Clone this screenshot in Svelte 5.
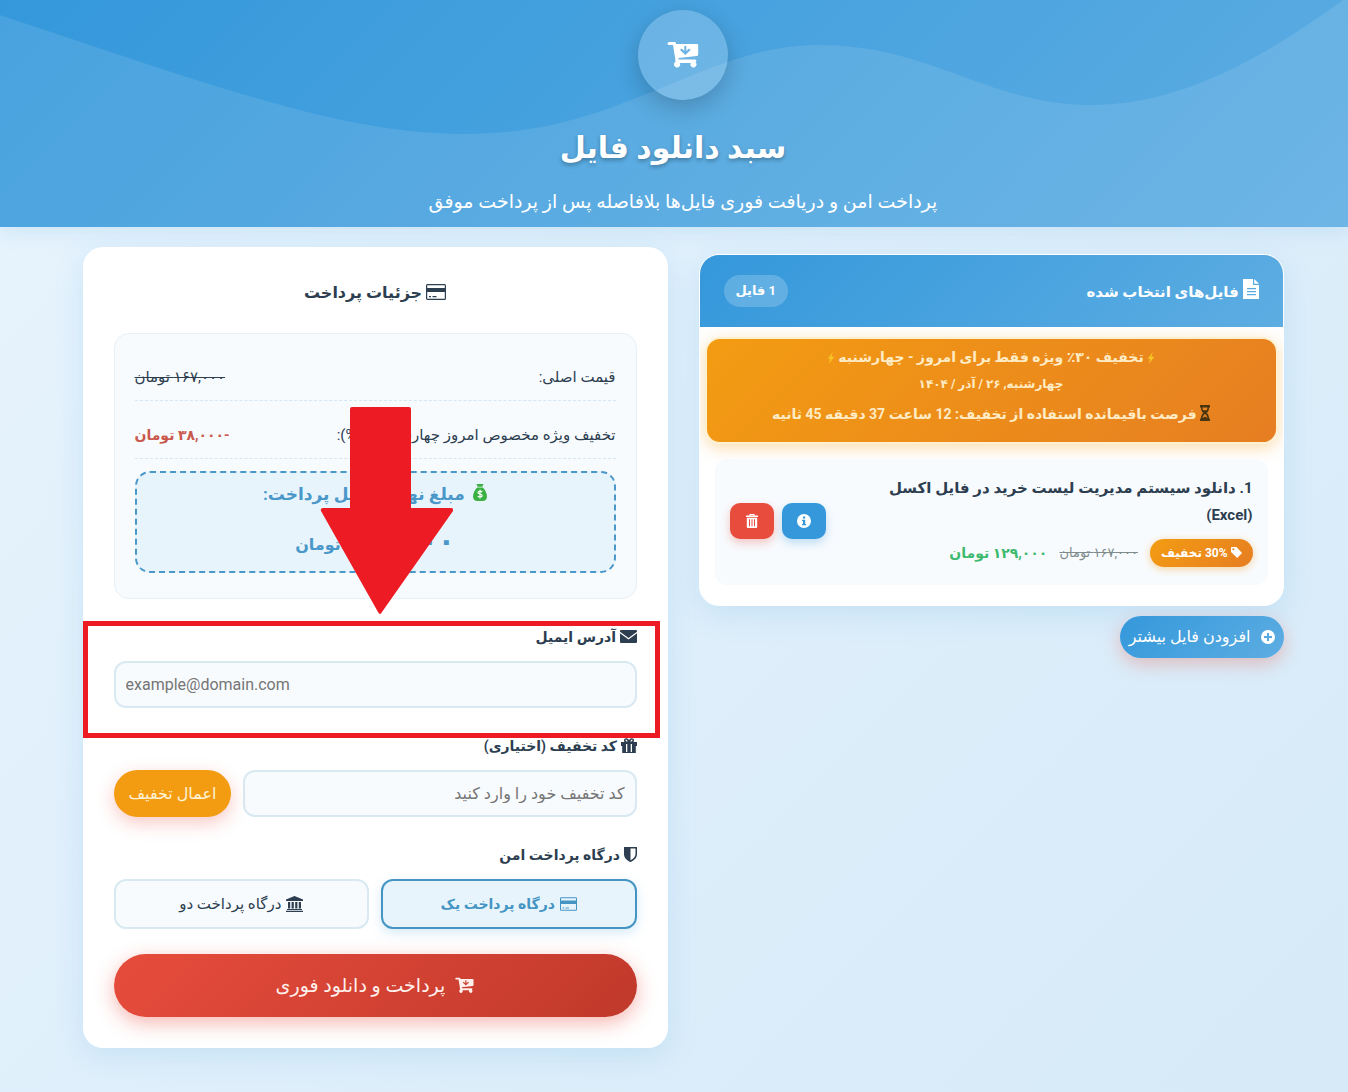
<script lang="ts">
	interface CartFile {
		id: number;
		title: string;
		discount: number;
		oldPrice: string;
		price: string;
	}

	let files = $state<CartFile[]>([
		{
			id: 1,
			title: 'دانلود سیستم مدیریت لیست خرید در فایل اکسل (Excel)',
			discount: 30,
			oldPrice: '۱۶۷,۰۰۰ تومان',
			price: '۱۲۹,۰۰۰ تومان'
		}
	]);

	let email = $state('');
	let coupon = $state('');
	let gateway = $state('one');

	function removeFile(id: number) {
		files = files.filter((f) => f.id !== id);
	}
</script>

{#snippet cartIcon()}
	<svg class="icon icon-cart" viewBox="0 0 32 28" aria-hidden="true">
		<path fill="currentColor" fill-rule="evenodd" d="M2 1h5.500a1.500 1.500 0 0 1 1.500 1.200V3h21a1.200 1.200 0 0 1 1.200 1.200V13.500a1.500 1.500 0 0 1-1.300 1.500L11.500 17l.2 1.500H28a1.400 1.400 0 0 1 .5 2.700 3 3 0 1 1-4.700.8H12.700a3 3 0 1 1-4.300-1L8.300 18 6 4H2a1.500 1.500 0 0 1 0-3zM17.300 5v5l-2.700-2.500L13 9.100 18.300 14l5.300-4.900L22 7.500 19.300 10V5z" />
	</svg>
{/snippet}

{#snippet cardIcon()}
	<svg class="icon icon-card" viewBox="0 0 20 16" aria-hidden="true">
		<rect x=".6" y=".6" width="18.800" height="14.800" rx="1" fill="none" stroke="currentColor" stroke-width="1.200" />
		<path fill="currentColor" d="M1 4h18v4H1zM3 12h2v1.200H3zM6.500 12h4v1.200h-4z" />
	</svg>
{/snippet}

<div class="page" dir="rtl">
	<header class="hero">
		<svg class="wave" viewBox="0 0 1348 227" preserveAspectRatio="none" aria-hidden="true">
			<path d="M0 15C225 90 345 134 465 134C625 134 700 45 820 45C930 45 990 105 1090 105C1180 105 1260 60 1343 0H1348V227H0Z" />
		</svg>
		<div class="hero-icon">{@render cartIcon()}</div>
		<h1>سبد دانلود فایل</h1>
		<p>پرداخت امن و دریافت فوری فایل‌ها بلافاصله پس از پرداخت موفق</p>
	</header>

	<main class="columns">
		<section class="files-column">
			<div class="files-card">
				<div class="files-header">
					<h2>
						<svg class="icon icon-file" viewBox="0 0 16 20" aria-hidden="true">
							<path fill="currentColor" fill-rule="evenodd" d="M0 0h10v6h6v14H0zM11.200 0 16 4.800h-4.800zM4 9v1.200h9V9zm0 3v1.200h9V12zm0 3v1.200h9V15z" />
						</svg>
						فایل‌های انتخاب شده
					</h2>
					<span class="count">{files.length} فایل</span>
				</div>

				<div class="promo">
					<p class="promo-title">
						<svg class="bolt" viewBox="0 0 8 14" aria-hidden="true"><path d="M6 0 0 8h3L1.500 14 8 5.500H4.500z" /></svg>
						تخفیف ۳۰٪ ویژه فقط برای امروز - چهارشنبه
						<svg class="bolt" viewBox="0 0 8 14" aria-hidden="true"><path d="M6 0 0 8h3L1.500 14 8 5.500H4.500z" /></svg>
					</p>
					<p class="promo-date">چهارشنبه, ۲۶ / آذر / ۱۴۰۴</p>
					<p class="promo-timer">
						<svg class="hourglass" viewBox="0 0 10 16" aria-hidden="true">
							<path fill-rule="evenodd" d="M0 0h10v2.500H9c0 3-1 4.500-2.500 5.500C8 9 9 10.500 9 13.500h1V16H0v-2.500h1C1 10.500 2 9 3.500 8 2 7 1 5.500 1 2.500H0zM2.500 2.500c0 1.200.3 2 .7 2.700h3.600c.4-.7.7-1.500.7-2.700zM5 9c-1.500 1-2.300 2.500-2.400 4L5 11.500 7.400 13C7.300 11.500 6.500 10 5 9z" />
						</svg>
						فرصت باقیمانده استفاده از تخفیف: 12 ساعت 37 دقیقه 45 ثانیه
					</p>
				</div>

				<ul class="file-list">
					{#each files as file, i (file.id)}
						<li class="file">
							<div class="file-info">
								<h3>{i + 1}. {file.title}</h3>
								<div class="prices">
									<span class="badge">
										<svg class="icon icon-tag" viewBox="0 0 12 12" aria-hidden="true">
											<path fill="currentColor" fill-rule="evenodd" d="M1 0h5l6 6.500L6.800 12 0 5.500V1a1 1 0 0 1 1-1zm1.600 1.400a1.100 1.100 0 1 0 0 2.200 1.100 1.100 0 0 0 0-2.200z" />
										</svg>
										{file.discount}% تخفیف
									</span>
									<del>{file.oldPrice}</del>
									<strong>{file.price}</strong>
								</div>
							</div>
							<div class="file-actions">
								<button class="square info" aria-label="اطلاعات فایل">
									<svg viewBox="0 0 14 14" aria-hidden="true">
										<path fill="currentColor" fill-rule="evenodd" d="M7 0a7 7 0 1 1 0 14A7 7 0 0 1 7 0zM6 2.500v2h2.200v-2zM5 5.700V7h1v3H5v1.300h4.200V10h-1V5.700z" />
									</svg>
								</button>
								<button class="square remove" aria-label="حذف فایل" onclick={() => removeFile(file.id)}>
									<svg viewBox="0 0 14 14" aria-hidden="true">
										<path fill="currentColor" fill-rule="evenodd" d="M4.500 0h5v1.500H13V3H1V1.500h3.500zm1 .9v.6h3V.9zM1.800 3.800h10.400V13a1 1 0 0 1-1 1H2.800a1 1 0 0 1-1-1zM4 5.200v7h1v-7zm2.500 0v7h1v-7zm2.500 0v7h1v-7z" />
									</svg>
								</button>
							</div>
						</li>
					{/each}
				</ul>
			</div>

			<button class="add-more">
				<svg viewBox="0 0 14 14" aria-hidden="true">
					<path fill="currentColor" fill-rule="evenodd" d="M7 0a7 7 0 1 1 0 14A7 7 0 0 1 7 0zM6 3v3H3v2h3v3h2V8h3V6H8V3z" />
				</svg>
				افزودن فایل بیشتر
			</button>
		</section>

		<section class="payment">
			<h2>{@render cardIcon()} جزئیات پرداخت</h2>

			<div class="summary">
				<div class="row">
					<span>قیمت اصلی:</span>
					<del>۱۶۷,۰۰۰ تومان</del>
				</div>
				<div class="row">
					<span>تخفیف ویژه مخصوص امروز چهارشنبه (30%):</span>
					<strong>-۳۸,۰۰۰ تومان</strong>
				</div>
				<div class="total">
					<div class="total-label">
						<svg class="money" viewBox="0 0 14 17" aria-hidden="true">
							<path fill="#3bb143" d="M3.500 0h7L9.300 2.800H4.700zM4.200 3.500h5.600C12 5.500 14 9 14 12.500c0 3-2 4.500-4.500 4.500h-5C2 17 0 15.500 0 12.500 0 9 2 5.500 4.200 3.500z" />
							<path fill="none" stroke="#fff" stroke-width="1.200" d="M9.200 8C8 6.800 5 7 5 8.600c0 1.800 4.200 1 4.200 3 0 1.700-3.200 1.900-4.500.6M7 5.800v8.600" />
						</svg>
						مبلغ نهایی قابل پرداخت:
					</div>
					<div class="total-price"><b>۱۲۹,۰۰۰</b> تومان</div>
				</div>
			</div>

			<div class="field">
				<label for="email">
					<svg class="icon icon-mail" viewBox="0 0 17 13" aria-hidden="true">
						<path fill="currentColor" d="M1 0h15a1 1 0 0 1 1 1v.8L8.500 8 0 1.800V1a1 1 0 0 1 1-1zM0 3.200 8.500 9.500 17 3.200V12a1 1 0 0 1-1 1H1a1 1 0 0 1-1-1z" />
					</svg>
					آدرس ایمیل
				</label>
				<input id="email" type="email" dir="ltr" placeholder="example@domain.com" bind:value={email} />
			</div>

			<div class="field">
				<label for="coupon">
					<svg class="icon icon-gift" viewBox="0 0 16 15" aria-hidden="true">
						<path fill="currentColor" fill-rule="evenodd" d="M0 4h3.500C1.500 1 5.500-1.500 8 2c2.500-3.500 6.500-1 4.500 2H16v4h-1.200v7H1.200V8H0zm4.500-2c0 1 1 1.600 2.200 1.600C6.200 2 4.800 1 4.500 2zm7 0c-.3-1-1.700 0-2.200 1.600C10.500 3.600 11.500 3 11.500 2zM5 6v8h1.300V6zm4.700 0v8H11V6z" />
					</svg>
					کد تخفیف (اختیاری)
				</label>
				<div class="coupon">
					<input id="coupon" type="text" placeholder="کد تخفیف خود را وارد کنید" bind:value={coupon} />
					<button class="apply">اعمال تخفیف</button>
				</div>
			</div>

			<fieldset class="field">
				<legend>
					<svg class="icon icon-shield" viewBox="0 0 13 15" aria-hidden="true">
						<path fill="currentColor" fill-rule="evenodd" d="M0 0h13v7c0 4-3 6.500-6.500 8C3 13.500 0 11 0 7zM6.500 1.600v11.600c3-1.500 5-3.500 5-6.200V1.600z" />
					</svg>
					درگاه پرداخت امن
				</legend>
				<div class="gateways">
					<label class="gateway" class:selected={gateway === 'one'}>
						<input type="radio" name="gateway" value="one" bind:group={gateway} />
						{@render cardIcon()} درگاه پرداخت یک
					</label>
					<label class="gateway" class:selected={gateway === 'two'}>
						<input type="radio" name="gateway" value="two" bind:group={gateway} />
						<svg class="icon icon-bank" viewBox="0 0 17 16" aria-hidden="true">
							<path fill="currentColor" d="M8.500 0 17 3.500V5H0V3.500zM2 6h2.200v6.500H2zm3.600 0h2.200v6.500H5.600zm3.600 0h2.200v6.500H9.200zm3.600 0H15v6.500h-2.200zM1 13h15v1H1zM0 14.700h17V16H0z" />
						</svg>
						درگاه پرداخت دو
					</label>
				</div>
			</fieldset>

			<button class="pay">{@render cartIcon()} پرداخت و دانلود فوری</button>

			<!-- guide marks pointing at the email field -->
			<svg class="arrow" viewBox="0 0 133 207" aria-hidden="true">
				<path d="M30 2q0-2 2-2h57q2 0 2 2v99h40q3 0 2 3L62 205q-2 4-4 0L1 104q-1-3 2-3h27z" />
			</svg>
			<div class="highlight"></div>
		</section>
	</main>
</div>

<style>
	:global(body) {
		background: #dcedfa;
	}

	.page {
		--blue: #3498db;
		--ink: #2c3e50;
		box-sizing: border-box;
		min-height: 100vh;
		overflow: hidden;
		background: linear-gradient(135deg, #e8f4fd, #d6eaf8);
		color: var(--ink);
		font-family: Roboto, 'DejaVu Sans', sans-serif;
		font-size: 15px;
		line-height: 24px;
	}

	.page * {
		box-sizing: border-box;
	}

	h1,
	h2,
	h3,
	p,
	ul {
		margin: 0;
		padding: 0;
	}

	button,
	input {
		font: inherit;
	}

	button {
		border: 0;
		cursor: pointer;
	}

	.icon {
		vertical-align: -2px;
	}

	.hero {
		position: relative;
		display: flex;
		flex-direction: column;
		align-items: center;
		padding: 10px 0 8px 18px;
		background: linear-gradient(135deg, #3498db, #5dade2);
		box-shadow: 0 4px 20px rgba(52, 152, 219, 0.15);
		color: #fff;
	}

	.wave {
		position: absolute;
		inset: 0;
		width: 100%;
		height: 100%;
		fill: rgba(255, 255, 255, 0.1);
	}

	.hero-icon {
		position: relative;
		display: grid;
		place-items: center;
		width: 90px;
		height: 90px;
		border-radius: 50%;
		background: rgba(255, 255, 255, 0.2);
		box-shadow: 0 8px 24px rgba(0, 0, 0, 0.2);
	}

	.hero-icon .icon {
		width: 32px;
		height: 28px;
	}

	.hero h1 {
		position: relative;
		margin-top: 20px;
		padding-right: 20px;
		font-size: 30px;
		line-height: 56px;
		text-shadow: 0 2px 4px rgba(0, 0, 0, 0.3);
	}

	.hero p {
		position: relative;
		margin-top: 8px;
		font-size: 19px;
		line-height: 35px;
	}

	.columns {
		display: grid;
		grid-template-columns: 1fr 1fr;
		gap: 31px;
		align-items: start;
		max-width: 1201px;
		margin: 0 auto;
		padding: 20px 0 44px 18px;
		box-sizing: content-box;
	}

	.files-column {
		margin-top: 7px;
	}

	.files-card {
		overflow: hidden;
		padding-bottom: 20px;
		border: 1px solid #fff;
		border-radius: 20px;
		background: #fff;
		box-shadow: 0 8px 30px rgba(52, 152, 219, 0.15);
	}

	.files-header {
		display: flex;
		align-items: center;
		justify-content: space-between;
		padding: 20px 24px;
		background: linear-gradient(135deg, #3498db, #5dade2);
		color: #fff;
	}

	.files-header h2 {
		font-size: 15px;
	}

	.icon-file {
		width: 16px;
		height: 20px;
	}

	.count {
		padding: 4px 12px;
		border-radius: 16px;
		background: rgba(255, 255, 255, 0.2);
		font-size: 13px;
		font-weight: 700;
	}

	.promo {
		margin: 10px 5px 15px;
		padding: 6px 8px 16px;
		border: 2px solid #fff0d0;
		border-radius: 15px;
		background: linear-gradient(135deg, #f39c12, #e67e22) border-box;
		box-shadow: 0 4px 16px rgba(243, 156, 18, 0.35);
		color: #ffebc4;
		font-size: 14px;
		font-weight: 700;
		text-align: center;
	}

	.promo-date {
		font-size: 12px;
		line-height: 30px;
	}

	.promo-timer {
		margin-top: 3px;
	}

	.bolt {
		width: 8px;
		height: 12px;
		fill: #f7c325;
		vertical-align: -2px;
	}

	.hourglass {
		width: 10px;
		height: 16px;
		fill: #4a3511;
		vertical-align: -2px;
	}

	.file-list {
		list-style: none;
		padding: 0 15px;
	}

	.file {
		display: flex;
		align-items: center;
		gap: 15px;
		padding: 16px 15px 18px;
		border-radius: 12px;
		background: #f8fbfe;
	}

	.file-info {
		flex: 1;
	}

	.file h3 {
		font-size: 15px;
		line-height: 27px;
	}

	.prices {
		display: flex;
		align-items: center;
		gap: 12px;
		margin-top: 10px;
	}

	.badge {
		padding: 2px 11px;
		border-radius: 14px;
		background: linear-gradient(135deg, #f39c12, #e67e22);
		box-shadow: 0 2px 8px rgba(243, 156, 18, 0.4);
		color: #fff;
		font-size: 12px;
		font-weight: 700;
	}

	.icon-tag {
		width: 11px;
		height: 11px;
		vertical-align: -1px;
	}

	.prices del {
		color: #7f8c8d;
		font-size: 13px;
	}

	.prices strong {
		color: #3dba6f;
		font-size: 14px;
	}

	.file-actions {
		display: flex;
		gap: 8px;
	}

	.square {
		display: grid;
		place-items: center;
		width: 44px;
		height: 36px;
		padding: 0;
		border-radius: 10px;
		color: #fff;
	}

	.square svg {
		width: 14px;
		height: 14px;
	}

	.info {
		background: var(--blue);
		box-shadow: 0 4px 10px rgba(52, 152, 219, 0.3);
	}

	.remove {
		background: #e74c3c;
		box-shadow: 0 4px 10px rgba(231, 76, 60, 0.3);
	}

	.add-more {
		display: flex;
		align-items: center;
		gap: 10px;
		margin-top: 10px;
		padding: 9px 9px;
		border-radius: 21px;
		background: linear-gradient(135deg, #3498db, #5dade2);
		box-shadow: 0 6px 18px rgba(231, 76, 60, 0.3);
		color: #fff;
		font-size: 16px;
	}

	.add-more svg {
		width: 14px;
		height: 14px;
	}

	.payment {
		position: relative;
		padding: 31px;
		border-radius: 20px;
		background: #fff;
		box-shadow: 0 8px 30px rgba(52, 152, 219, 0.15);
	}

	.payment h2 {
		margin-bottom: 25px;
		font-size: 16px;
		line-height: 30px;
		text-align: center;
	}

	.icon-card {
		width: 20px;
		height: 16px;
	}

	.summary {
		display: flex;
		flex-direction: column;
		gap: 12px;
		margin-bottom: 25px;
		padding: 21px 20px 25px;
		border: 1px solid #e6f0f7;
		border-radius: 15px;
		background: #f8fbfe;
	}

	.row {
		display: flex;
		justify-content: space-between;
		padding: 10px 0 11px;
		border-bottom: 1px dashed #d6e6f2;
	}

	.row strong {
		color: #c9584d;
		font-size: 14px;
	}

	.total {
		padding: 6px 0;
		border: 2px dashed #4a97c9;
		border-radius: 15px;
		background: #e8f4fc;
		color: #4a97c9;
		font-weight: 700;
		text-align: center;
	}

	.total-label {
		font-size: 17px;
		line-height: 30px;
	}

	.money {
		width: 14px;
		height: 17px;
		margin-left: 4px;
		vertical-align: -1px;
	}

	.total-price {
		margin-top: 12px;
		font-size: 16px;
		line-height: 40px;
	}

	.total-price b {
		font-size: 28px;
	}

	.field {
		min-width: 0;
		margin: 0 0 25px;
		padding: 0;
		border: 0;
	}

	.field > label,
	legend {
		display: block;
		margin-bottom: 10px;
		padding: 0;
		font-size: 14px;
		font-weight: 700;
		line-height: 27px;
	}

	.icon-mail {
		width: 17px;
		height: 13px;
		vertical-align: -1px;
	}

	.icon-gift {
		width: 16px;
		height: 15px;
	}

	.icon-shield {
		width: 13px;
		height: 15px;
	}

	.icon-bank {
		width: 17px;
		height: 16px;
	}

	input[type='email'],
	input[type='text'] {
		display: block;
		width: 100%;
		height: 47px;
		padding: 0 10px;
		border: 2px solid #d9e9f2;
		border-radius: 12px;
		background: #f8fbfe;
		color: var(--ink);
		font-size: 16px;
	}

	input::placeholder {
		color: #757575;
	}

	.coupon {
		display: flex;
		gap: 12px;
	}

	.apply {
		flex-shrink: 0;
		padding: 0 15px;
		border-radius: 24px;
		background: #f39c12;
		box-shadow: 0 6px 18px rgba(231, 76, 60, 0.3);
		color: #fff3d6;
		font-size: 16px;
	}

	.gateways {
		display: grid;
		grid-template-columns: 1fr 1fr;
		gap: 12px;
	}

	.gateway {
		display: flex;
		align-items: center;
		justify-content: center;
		gap: 5px;
		height: 50px;
		border: 2px solid #d9e9f2;
		border-radius: 12px;
		background: #f8fbfe;
		cursor: pointer;
	}

	.gateway input {
		appearance: none;
		position: absolute;
		margin: 0;
	}

	.gateway .icon-card {
		width: 17px;
		height: 14px;
	}

	.gateway.selected {
		border-color: #4595c4;
		background: #e8f4fc;
		box-shadow: 0 4px 12px rgba(52, 152, 219, 0.2);
		color: #4595c4;
		font-size: 14px;
		font-weight: 700;
	}

	.pay {
		display: flex;
		align-items: center;
		justify-content: center;
		gap: 10px;
		width: 100%;
		height: 63px;
		border-radius: 32px;
		background: linear-gradient(135deg, #e74c3c, #c0392b);
		box-shadow: 0 6px 20px rgba(231, 76, 60, 0.4);
		color: #fff0ec;
		font-size: 19px;
	}

	.pay .icon {
		width: 19px;
		height: 17px;
	}

	.arrow {
		position: absolute;
		top: 160px;
		left: 237px;
		width: 133px;
		height: 207px;
		fill: #ed1c24;
	}

	.highlight {
		position: absolute;
		top: 374px;
		left: 0;
		right: 8px;
		height: 117px;
		border: 5px solid #ed1c24;
		pointer-events: none;
	}
</style>
